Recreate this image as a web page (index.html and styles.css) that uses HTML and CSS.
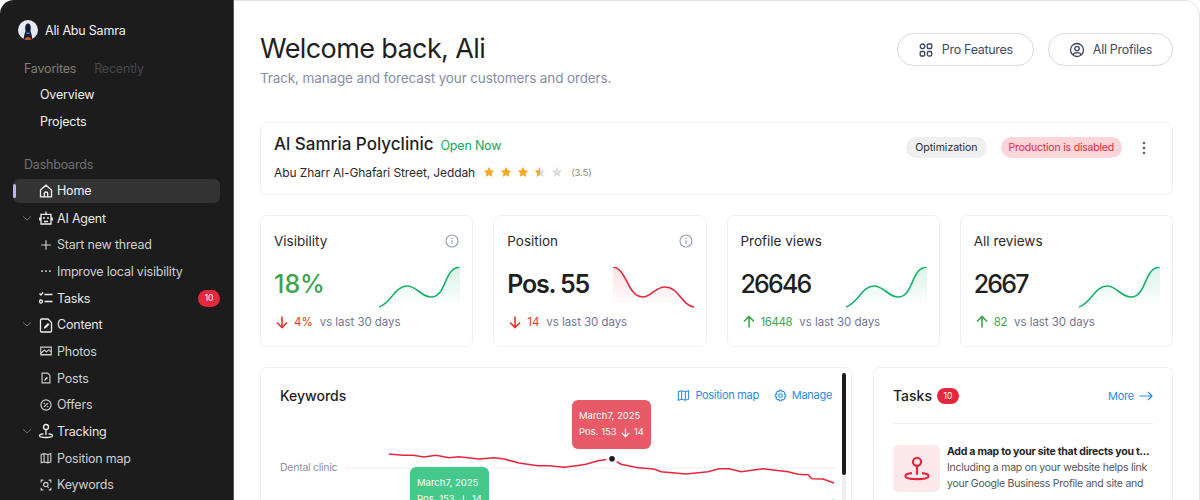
FILE: index.html
```html
<!DOCTYPE html>
<html lang="en">
<head>
  <meta charset="UTF-8" />
  <meta name="viewport" content="width=device-width, initial-scale=1.0" />
  <title>Dashboard</title>
  <link rel="stylesheet" href="styles.css">
</head>

<body>
  <div class="app">
    <aside class="sidebar">
      <div class="profile">
        <svg class="avatar" viewBox="0 0 20 20">
          <circle cx="10" cy="10" r="10" fill="#e6eaf4"/>
          <path d="M5.500 20 C6 15 7 13 7.500 11 C6.500 6 8 3.500 10 3.500 C12 3.500 13.500 6 12.500 11 C13 13 14 15 14.500 20 Z" fill="#141a33"/>
          <path d="M6.500 20 C7 18 8 17 10 17 C12 17 13 18 13.500 20 Z" fill="#c2542c"/>
          <path d="M8.500 11 C9 13 11 13 11.500 11 L11.500 14 L8.500 14 Z" fill="#3d6fb8"/>
        </svg>
        <span>Ali Abu Samra</span>
      </div>

      <div class="tabs">
        <span class="tab-on">Favorites</span>
        <span class="tab-off">Recently</span>
      </div>
      <div class="nav-row fav">Overview</div>
      <div class="nav-row fav">Projects</div>

      <div class="section-label">Dashboards</div>

      <div class="nav-row active">
        <span class="marker"></span>
        <svg class="icon" viewBox="0 0 16 16"><path d="M2.500 7 L8 2.200 L13.500 7 V13.800 H2.500 Z M6.300 13.800 V10.500 C6.300 8.500 9.700 8.500 9.700 10.500 V13.800"/></svg>
        <span>Home</span>
      </div>
      <div class="nav-row main-row">
        <svg class="chev" viewBox="0 0 10 10"><path d="M1 3.300 L5 7 L9 3.300"/></svg>
        <svg class="icon" viewBox="0 0 16 16"><path d="M8 1.500 V4 M3 4.300 H13 V14 H3 Z M1.800 7.500 V10.500 M14.200 7.500 V10.500 M6 11.500 H10"/><circle cx="6" cy="8" r=".9" class="solid"/><circle cx="10" cy="8" r=".9" class="solid"/></svg>
        <span>AI Agent</span>
      </div>
      <div class="nav-row sub">
        <svg class="icon" viewBox="0 0 16 16"><path d="M8 2.500 V13.500 M2.500 8 H13.500"/></svg>
        <span>Start new thread</span>
      </div>
      <div class="nav-row sub">
        <svg class="icon" viewBox="0 0 16 16"><circle cx="3.500" cy="8" r="1" class="solid"/><circle cx="8" cy="8" r="1" class="solid"/><circle cx="12.500" cy="8" r="1" class="solid"/></svg>
        <span>Improve local visibility</span>
      </div>
      <div class="nav-row main-row">
        <svg class="icon" viewBox="0 0 16 16"><path d="M6.500 4.500 H14.500 M6.500 11.500 H14.500 M1.500 3.500 L3 5 L5 2.500"/><circle cx="3" cy="11.500" r="1.500"/></svg>
        <span>Tasks</span>
        <span class="count">10</span>
      </div>
      <div class="nav-row main-row">
        <svg class="chev" viewBox="0 0 10 10"><path d="M1 3.300 L5 7 L9 3.300"/></svg>
        <svg class="icon" viewBox="0 0 16 16"><path d="M10 2 H3.500 C2.800 2 2.500 2.300 2.500 3 V14 C2.500 14.700 2.800 15 3.500 15 H12.500 C13.200 15 13.500 14.700 13.500 14 V5.500 Z"/><path d="M5.800 11.800 L6.200 9.800 L10 6 L11.500 7.500 L7.700 11.300 Z" class="solid"/></svg>
        <span>Content</span>
      </div>
      <div class="nav-row sub">
        <svg class="icon" viewBox="0 0 16 16"><path d="M2 3.500 H14 V12.500 H2 Z M2.500 10.500 L6 7 L8.500 9 L11 6.500 L13.500 9 M2.500 12 H13.500"/></svg>
        <span>Photos</span>
      </div>
      <div class="nav-row sub">
        <svg class="icon" viewBox="0 0 16 16"><path d="M10 2.500 H3.500 V13.500 H12.500 V5 Z"/><path d="M6 11 L6.300 9.500 L9 6.800 L10.200 8 L7.500 10.700 Z" class="solid"/></svg>
        <span>Posts</span>
      </div>
      <div class="nav-row sub">
        <svg class="icon" viewBox="0 0 16 16"><circle cx="8" cy="8" r="5.800"/><path d="M5.800 10.200 L10.200 5.800"/><circle cx="6" cy="6.200" r=".8" class="solid"/><circle cx="10" cy="9.800" r=".8" class="solid"/></svg>
        <span>Offers</span>
      </div>
      <div class="nav-row main-row">
        <svg class="chev" viewBox="0 0 10 10"><path d="M1 3.300 L5 7 L9 3.300"/></svg>
        <svg class="icon" viewBox="0 0 16 16"><circle cx="8" cy="4" r="2.500"/><path d="M8 6.500 V12 M5.500 10.800 C2.800 11 1.500 11.800 1.500 12.700 C1.500 14 4 14.500 8 14.500 C12 14.500 14.500 14 14.500 12.700 C14.500 11.800 13.200 11 10.500 10.800"/></svg>
        <span>Tracking</span>
      </div>
      <div class="nav-row sub">
        <svg class="icon" viewBox="0 0 16 16"><path d="M2.500 4 L5.800 3 L10.200 4 L13.500 3 V12.500 L10.200 13.500 L5.800 12.500 L2.500 13.500 Z M5.800 3 V12.500 M10.200 4 V13.500"/></svg>
        <span>Position map</span>
      </div>
      <div class="nav-row sub">
        <svg class="icon" viewBox="0 0 16 16"><path d="M2.500 5 V2.500 H5 M11 2.500 H13.500 V5 M13.500 11 V13.500 H11 M5 13.500 H2.500 V11 M9.500 9.500 L11 11"/><circle cx="7.800" cy="7.500" r="2.500"/></svg>
        <span>Keywords</span>
      </div>
    </aside>

    <main class="content">
      <header class="page-head">
        <div>
          <h1>Welcome back, Ali</h1>
          <p class="subtitle">Track, manage and forecast your customers and orders.</p>
        </div>
        <div class="head-actions">
          <button class="pill-btn">
            <svg viewBox="0 0 16 16"><circle cx="4.500" cy="4.300" r="2.300"/><rect x="9.300" y="2" width="4.500" height="4.500" rx="1"/><rect x="2.200" y="9.500" width="4.500" height="4.500" rx="1"/><rect x="9.300" y="9.500" width="4.500" height="4.500" rx="1.500"/></svg>
            Pro Features
          </button>
          <button class="pill-btn">
            <svg viewBox="0 0 16 16"><circle cx="8" cy="8" r="6.500"/><circle cx="8" cy="6.500" r="2.200"/><path d="M3.800 13 C4.500 9.800 11.500 9.800 12.200 13"/></svg>
            All Profiles
          </button>
        </div>
      </header>

      <section class="card business">
        <div>
          <div class="biz-title">
            <h2>Al Samria Polyclinic</h2>
            <span class="open">Open Now</span>
          </div>
          <div class="biz-address">
            <span>Abu Zharr Al-Ghafari Street, Jeddah</span>
            <span class="stars">
              <svg viewBox="0 0 12 12"><path class="star-on" d="M6 .8 L7.600 4.200 L11.300 4.700 L8.600 7.200 L9.300 10.900 L6 9.100 L2.700 10.900 L3.400 7.200 L.7 4.700 L4.400 4.200 Z"/></svg>
              <svg viewBox="0 0 12 12"><path class="star-on" d="M6 .8 L7.600 4.200 L11.300 4.700 L8.600 7.200 L9.300 10.900 L6 9.100 L2.700 10.900 L3.400 7.200 L.7 4.700 L4.400 4.200 Z"/></svg>
              <svg viewBox="0 0 12 12"><path class="star-on" d="M6 .8 L7.600 4.200 L11.300 4.700 L8.600 7.200 L9.300 10.900 L6 9.100 L2.700 10.900 L3.400 7.200 L.7 4.700 L4.400 4.200 Z"/></svg>
              <svg viewBox="0 0 12 12"><path class="star-off" d="M6 .8 L7.600 4.200 L11.300 4.700 L8.600 7.200 L9.300 10.900 L6 9.100 L2.700 10.900 L3.400 7.200 L.7 4.700 L4.400 4.200 Z"/><path class="star-on" d="M6 .8 V9.100 L2.700 10.900 L3.400 7.200 L.7 4.700 L4.400 4.200 Z"/></svg>
              <svg viewBox="0 0 12 12"><path class="star-off" d="M6 .8 L7.600 4.200 L11.300 4.700 L8.600 7.200 L9.300 10.900 L6 9.100 L2.700 10.900 L3.400 7.200 L.7 4.700 L4.400 4.200 Z"/></svg>
            </span>
            <span class="rating">(3.5)</span>
          </div>
        </div>
        <div class="biz-tags">
          <span class="tag tag-grey">Optimization</span>
          <span class="tag tag-red">Production is disabled</span>
          <svg class="dots" viewBox="0 0 4 14"><circle cx="2" cy="2" r="1.300"/><circle cx="2" cy="7" r="1.300"/><circle cx="2" cy="12" r="1.300"/></svg>
        </div>
      </section>

      <section class="stats">
        <div class="card stat">
          <div class="stat-head">
            <span>Visibility</span>
            <svg class="info" viewBox="0 0 14 14"><circle cx="7" cy="7" r="6"/><path d="M7 6.300 V10"/><circle cx="7" cy="4.200" r=".8" class="info-dot"/></svg>
          </div>
          <div class="stat-body">
            <span class="stat-value green-value">18%</span>
            <svg class="spark" viewBox="0 0 82 41">
              <defs>
                <linearGradient id="fillGreen" x1="0" y1="0" x2="0" y2="1"><stop offset="0" stop-color="#17b26a" stop-opacity=".16"/><stop offset="1" stop-color="#17b26a" stop-opacity="0"/></linearGradient>
                <linearGradient id="fillRed" x1="0" y1="0" x2="0" y2="1"><stop offset="0" stop-color="#e5273d" stop-opacity=".14"/><stop offset="1" stop-color="#e5273d" stop-opacity="0"/></linearGradient>
              </defs>
              <path d="M0 40 C12 36 16 19 28 19 C38 19 42 30 52 30 C68 30 64 1 81 0 V36 H10 Z" fill="url(#fillGreen)"/>
              <path d="M0 40 C12 36 16 19 28 19 C38 19 42 30 52 30 C68 30 64 1 81 0" class="line-green"/>
            </svg>
          </div>
          <div class="delta">
            <svg class="arrow red" viewBox="0 0 14 14"><path d="M7 1.500 V12.500 M2 7.500 L7 12.500 L12 7.500"/></svg>
            <span class="delta-red">4%</span>
            <span class="delta-note">vs last 30 days</span>
          </div>
        </div>

        <div class="card stat">
          <div class="stat-head">
            <span>Position</span>
            <svg class="info" viewBox="0 0 14 14"><circle cx="7" cy="7" r="6"/><path d="M7 6.300 V10"/><circle cx="7" cy="4.200" r=".8" class="info-dot"/></svg>
          </div>
          <div class="stat-body">
            <span class="stat-value pos-value">Pos. 55</span>
            <svg class="spark" viewBox="0 0 82 41">
              <path d="M0 0 C14 1 14 30 30 30 C38 30 42 20 52 20 C66 20 68 38 81 40 L70 36 H0 Z" fill="url(#fillRed)"/>
              <path d="M0 0 C14 1 14 30 30 30 C38 30 42 20 52 20 C66 20 68 38 81 40" class="line-red"/>
            </svg>
          </div>
          <div class="delta">
            <svg class="arrow red" viewBox="0 0 14 14"><path d="M7 1.500 V12.500 M2 7.500 L7 12.500 L12 7.500"/></svg>
            <span class="delta-red">14</span>
            <span class="delta-note">vs last 30 days</span>
          </div>
        </div>

        <div class="card stat">
          <div class="stat-head"><span>Profile views</span></div>
          <div class="stat-body">
            <span class="stat-value num-value">26646</span>
            <svg class="spark" viewBox="0 0 82 41">
              <path d="M0 40 C12 36 16 19 28 19 C38 19 42 30 52 30 C68 30 64 1 81 0 V36 H10 Z" fill="url(#fillGreen)"/>
              <path d="M0 40 C12 36 16 19 28 19 C38 19 42 30 52 30 C68 30 64 1 81 0" class="line-green"/>
            </svg>
          </div>
          <div class="delta">
            <svg class="arrow up" viewBox="0 0 14 14"><path d="M7 12.500 V1.500 M2 6.500 L7 1.500 L12 6.500"/></svg>
            <span class="delta-green">16448</span>
            <span class="delta-note">vs last 30 days</span>
          </div>
        </div>

        <div class="card stat">
          <div class="stat-head"><span>All reviews</span></div>
          <div class="stat-body">
            <span class="stat-value num-value">2667</span>
            <svg class="spark" viewBox="0 0 82 41">
              <path d="M0 40 C12 36 16 19 28 19 C38 19 42 30 52 30 C68 30 64 1 81 0 V36 H10 Z" fill="url(#fillGreen)"/>
              <path d="M0 40 C12 36 16 19 28 19 C38 19 42 30 52 30 C68 30 64 1 81 0" class="line-green"/>
            </svg>
          </div>
          <div class="delta">
            <svg class="arrow up" viewBox="0 0 14 14"><path d="M7 12.500 V1.500 M2 6.500 L7 1.500 L12 6.500"/></svg>
            <span class="delta-green">82</span>
            <span class="delta-note">vs last 30 days</span>
          </div>
        </div>
      </section>

      <section class="bottom">
        <div class="card keywords">
          <div class="kw-head">
            <h3>Keywords</h3>
            <div class="kw-links">
              <a>
                <svg viewBox="0 0 14 14"><path d="M1.500 3 L5 1.800 L9 3 L12.500 1.800 V11 L9 12.200 L5 11 L1.500 12.200 Z M5 1.800 V11 M9 3 V12.200"/></svg>
                Position map
              </a>
              <a>
                <svg viewBox="0 0 14 14"><circle cx="7" cy="7" r="2"/><path d="M5.800 1.300 H8.200 L8.600 3 L10.200 2.400 L11.900 4.100 L11 5.600 L12.700 6.200 V8 L11 8.400 L11.900 10 L10.200 11.700 L8.600 11 L8.200 12.700 H5.800 L5.400 11 L3.800 11.700 L2.100 10 L3 8.400 L1.300 8 V6.200 L3 5.600 L2.100 4.100 L3.800 2.400 L5.400 3 Z"/></svg>
                Manage
              </a>
            </div>
          </div>
          <div class="scroll-track"><div class="scroll-thumb"></div></div>

          <span class="axis-label">Dental clinic</span>
          <svg class="kw-chart" viewBox="0 0 592 133">
            <path d="M84 100 H574" class="grid-line"/>
            <polyline class="line-kw" points="128,86 142,87.300 152,87.300 163,89 175,87.300 188,89.700 198,88.700 218,91 233,89.700 243,91 258,95 277,97.700 288,97.700 303,99.300 315,97.700 325,96.300 337,92.700 348,91.300 351,90.700 360,96.300 377,99.700 393,101 400,103.700 425,106 447,103.700 458,100.700 468,100.700 480,103.700 502,100.700 527,103.700 537,106.300 547,106.700 551,110.700 562,111 573,115"/>
            <circle cx="351" cy="90.700" r="6" fill="#fff" opacity=".85"/>
            <circle cx="351" cy="90.700" r="2.800" fill="#1c1c1c"/>
            <path d="M571 132.500 H574" stroke="#17b26a" stroke-width="1.500"/>
          </svg>

          <div class="tip tip-red">
            <div>March7, 2025</div>
            <div class="tip-row"><span>Pos. 153</span><svg viewBox="0 0 12 12"><path d="M6 1.500 V10.500 M2 6.500 L6 10.500 L10 6.500"/></svg><span>14</span></div>
          </div>
          <div class="tip tip-green">
            <div>March7, 2025</div>
            <div class="tip-row"><span>Pos. 153</span><svg viewBox="0 0 12 12"><path d="M6 1.500 V10.500 M2 6.500 L6 10.500 L10 6.500"/></svg><span>14</span></div>
          </div>
        </div>

        <div class="card tasks">
          <div class="tasks-head">
            <h3>Tasks</h3>
            <span class="count">10</span>
            <a class="more">More
              <svg viewBox="0 0 14 10"><path d="M.5 5 H13 M9 1 L13 5 L9 9"/></svg>
            </a>
          </div>
          <div class="task">
            <div class="task-icon">
              <svg viewBox="3 3 18 18"><circle cx="12" cy="7" r="2.800"/><path d="M12 9.800 V16 M8.500 14.800 C5.500 15 4 15.800 4 17 C4 18.400 7.500 19 12 19 C16.500 19 20 18.400 20 17 C20 15.800 18.500 15 15.500 14.800"/></svg>
            </div>
            <div class="task-text">
              <div class="task-title">Add a map to your site that directs you t...</div>
              <p>Including a map on your website helps link your Google Business Profile and site and ...</p>
            </div>
          </div>
        </div>
      </section>
    </main>
  </div>
</body>
</html>
```

FILE: styles.css
```css
* {
  box-sizing: border-box;
}

html, body {
  height: 100%;
}

body {
  margin: 0;
  background: #fff;
  font-family: Inter, "Noto Sans", sans-serif;
  color: #1c1c1c;
  overflow: hidden;
}

h1, h2, h3, p {
  margin: 0;
  font-weight: 500;
}

.app {
  display: flex;
  height: 500px;
  overflow: hidden;
}

/* Sidebar */

.sidebar {
  width: 234px;
  flex-shrink: 0;
  padding: 20px 13px 0 0;
  background: #1c1c1c;
  border-top-left-radius: 14px;
  border-right: 1px solid #5a5a5a;
  color: #fff;
  font-size: 12.5px;
  letter-spacing: -0.2px;
}

.profile {
  display: flex;
  align-items: center;
  gap: 7px;
  height: 20px;
  padding-left: 18px;
  color: #f2f2f2;
}

.avatar {
  width: 20px;
  height: 20px;
  flex-shrink: 0;
}

.tabs {
  display: flex;
  gap: 18px;
  margin-top: 21px;
  height: 16px;
  line-height: 16px;
  padding-left: 24px;
}

.tab-on {
  color: #808080;
}

.tab-off {
  color: #484848;
}

.nav-row {
  position: relative;
  display: flex;
  align-items: center;
  height: 26.67px;
  padding-left: 38px;
  color: #e6e6e6;
}

.tabs + .nav-row {
  margin-top: 4.5px;
}

.nav-row.fav {
  padding-left: 40px;
  color: #f0f0f0;
}

.nav-row .icon {
  width: 16px;
  height: 16px;
  margin-right: 3px;
  flex-shrink: 0;
  fill: none;
  stroke: #f0f0f0;
  stroke-width: 1.300;
}

.nav-row.sub .icon {
  width: 14px;
  height: 14px;
  margin: 0 4px 0 1px;
  stroke: #d0d0d0;
}

.nav-row.sub {
  color: #cfcfcf;
}

.icon .solid {
  fill: #f0f0f0;
  stroke: none;
}

.chev {
  position: absolute;
  left: 22px;
  top: 8px;
  width: 10px;
  height: 10px;
  fill: none;
  stroke: #6e6e6e;
  stroke-width: 1;
}

.section-label {
  margin-top: 22px;
  margin-bottom: 6px;
  height: 16px;
  line-height: 16px;
  padding-left: 24px;
  color: #717171;
}

.nav-row.active {
  margin-left: 13px;
  padding-left: 25px;
  height: 24px;
  margin-bottom: 2px;
  margin-top: 1px;
  background: #333;
  border-radius: 6px;
  color: #f4f4f4;
}

.marker {
  position: absolute;
  left: 0;
  top: 5px;
  width: 3px;
  height: 14px;
  border-radius: 2px;
  background: #b9b5f2;
}

.count {
  display: inline-flex;
  align-items: center;
  justify-content: center;
  width: 22px;
  height: 17px;
  border-radius: 9px;
  background: #e5273d;
  color: #fff;
  font-size: 8.500px;
}

.nav-row .count {
  margin-left: auto;
}

/* Main area */

.content {
  flex: 1;
  min-width: 0;
  padding: 30px 26px 0 26px;
  border-top: 1px solid #e4e4e4;
  border-right: 1px solid #e4e4e4;
  border-top-right-radius: 16px;
}

.page-head {
  display: flex;
  justify-content: space-between;
  align-items: flex-start;
  height: 91px;
}

h1 {
  font-size: 27px;
  line-height: 36px;
  font-weight: 400;
  letter-spacing: -0.6px;
  color: #1f1f1f;
}

.subtitle {
  margin-top: 2px;
  font-size: 13.500px;
  line-height: 18px;
  font-weight: 400;
  letter-spacing: -0.13px;
  color: #878da6;
}

.head-actions {
  display: flex;
  gap: 14px;
  margin-top: 2px;
}

.pill-btn {
  display: flex;
  align-items: center;
  gap: 8px;
  height: 33px;
  padding: 0 20px;
  background: #fff;
  border: 1px solid #d5d9e3;
  border-radius: 17px;
  color: #424c64;
  font: inherit;
  font-size: 12.500px;
  letter-spacing: -0.3px;
}

.pill-btn svg {
  width: 16px;
  height: 16px;
  fill: none;
  stroke: #3a445c;
  stroke-width: 1.300;
}

.card {
  background: #fff;
  border: 1px solid #f0f0f2;
  border-radius: 7px;
}

.business {
  display: flex;
  justify-content: space-between;
  align-items: flex-start;
  height: 73px;
  padding: 10px 26px 0 13px;
}

.biz-title {
  display: flex;
  align-items: baseline;
  gap: 7px;
  height: 22px;
}

h2 {
  font-size: 17px;
  font-weight: 500;
  line-height: 22px;
  color: #1f1f1f;
}

.open {
  font-size: 12.500px;
  letter-spacing: -0.2px;
  color: #14a660;
}

.biz-address {
  display: flex;
  align-items: center;
  margin-top: 8px;
  height: 18px;
  font-size: 12px;
  letter-spacing: -0.1px;
  color: #2a2a2a;
}

.stars {
  display: flex;
  gap: 5px;
  margin: 0 8px 0 8px;
}

.stars svg {
  width: 12px;
  height: 12px;
}

.star-on {
  fill: #f9a825;
}

.star-off {
  fill: #dedede;
}

.rating {
  font-size: 9.500px;
  color: #8a8a8a;
}

.biz-tags {
  display: flex;
  align-items: center;
  margin-top: 4px;
}

.tag {
  display: inline-flex;
  align-items: center;
  height: 21px;
  padding: 0 8px;
  border-radius: 11px;
  font-size: 10.500px;
}

.tag-grey {
  padding: 0 9px;
  background: #efefef;
  color: #2a2a2a;
  margin-right: 14px;
}

.tag-red {
  background: #fbd5d9;
  color: #e5273d;
  letter-spacing: -0.2px;
}

.dots {
  width: 4px;
  height: 14px;
  margin-left: 20px;
  fill: #59607a;
}

/* Stat cards */

.stats {
  display: grid;
  grid-template-columns: repeat(4, 1fr);
  gap: 20px;
  margin-top: 20px;
}

.stat {
  height: 132px;
  padding: 15px 11px 0 13px;
}

.stat-head {
  display: flex;
  justify-content: space-between;
  align-items: center;
  height: 20px;
  font-size: 13.500px;
  color: #2a2a2a;
}

.info {
  width: 14px;
  height: 14px;
  margin-right: 2px;
  fill: none;
  stroke: #9aa3b8;
  stroke-width: 1.200;
}

.info-dot {
  fill: #9aa3b8;
  stroke: none;
}

.stat-body {
  display: flex;
  justify-content: space-between;
  margin-top: 16px;
  height: 41px;
}

.stat-value {
  margin-top: 2px;
  font-size: 25px;
  line-height: 30px;
  font-weight: 500;
  color: #1f1f1f;
}

.green-value {
  color: #3fa34d;
}

.pos-value {
  font-weight: 600;
  letter-spacing: -1.200px;
}

.num-value {
  letter-spacing: -1.800px;
}

.spark {
  width: 82px;
  height: 41px;
  flex-shrink: 0;
}

.line-green, .line-red, .line-kw {
  fill: none;
  stroke-width: 1.600;
}

.line-green {
  stroke: #17b26a;
}

.line-red {
  stroke: #e5273d;
}

.delta {
  display: flex;
  align-items: center;
  margin-top: 6px;
  height: 16px;
  font-size: 11.500px;
}

.arrow {
  width: 14px;
  height: 14px;
  margin: 0 5px 0 1px;
  fill: none;
  stroke-width: 1.600;
}

.arrow.red {
  stroke: #e5352b;
}

.arrow.up {
  stroke: #3fa34d;
}

.delta-red {
  color: #e5352b;
  margin-right: 7px;
}

.delta-green {
  color: #3fa34d;
  margin-right: 7px;
  letter-spacing: -0.4px;
}

.delta-note {
  color: #6f7690;
  letter-spacing: -0.05px;
}

/* Bottom row */

.bottom {
  display: flex;
  gap: 21px;
  margin-top: 20px;
}

.keywords {
  position: relative;
  width: 592px;
  height: 160px;
  flex-shrink: 0;
}

.kw-head {
  display: flex;
  justify-content: space-between;
  align-items: center;
  height: 20px;
  margin-top: 17px;
  padding: 0 19px;
}

h3 {
  font-size: 14px;
  font-weight: 500;
  color: #1f1f1f;
}

.kw-links {
  display: flex;
  gap: 15px;
}

.kw-links a {
  display: flex;
  align-items: center;
  gap: 5px;
  font-size: 11px;
  letter-spacing: -0.3px;
  color: #2b8be6;
}

.kw-links svg {
  width: 13px;
  height: 13px;
  fill: none;
  stroke: #2b8be6;
  stroke-width: 1.100;
}

.scroll-track {
  position: absolute;
  top: 5px;
  right: 5px;
  width: 4px;
  height: 150px;
  background: #eee;
  border-radius: 2px;
}

.scroll-thumb {
  height: 102px;
  background: #1c1c1c;
  border-radius: 2px;
}

.axis-label {
  position: absolute;
  left: 19px;
  top: 93px;
  font-size: 10.500px;
  letter-spacing: -0.25px;
  color: #8b90a6;
}

.kw-chart {
  position: absolute;
  left: 0;
  top: 0;
  width: 592px;
  height: 133px;
}

.grid-line {
  stroke: #eef0f3;
  stroke-width: 1;
}

.line-kw {
  stroke: #e5273d;
}

.tip {
  position: absolute;
  width: 79px;
  height: 49px;
  padding: 8px 7px;
  border-radius: 6px;
  color: #fff;
  font-size: 9.500px;
  line-height: 16px;
}

.tip-row {
  display: flex;
  justify-content: space-between;
  align-items: center;
}

.tip-row svg {
  width: 11px;
  height: 11px;
  fill: none;
  stroke: #fff;
  stroke-width: 1.300;
}

.tip-red {
  left: 311px;
  top: 32px;
  background: #e85a68;
}

.tip-green {
  left: 149px;
  top: 99px;
  background: #45c98b;
}

/* Tasks card */

.tasks {
  flex: 1;
  min-width: 0;
  height: 160px;
  padding: 0 19px;
}

.tasks-head {
  display: flex;
  align-items: center;
  gap: 5px;
  height: 56px;
  border-bottom: 1px solid #eceef1;
}

.tasks-head .count {
  height: 16px;
  font-size: 8.500px;
}

.more {
  display: flex;
  align-items: center;
  gap: 5px;
  margin-left: auto;
  font-size: 11px;
  letter-spacing: -0.2px;
  color: #2b8be6;
}

.more svg {
  width: 14px;
  height: 10px;
  fill: none;
  stroke: #2b8be6;
  stroke-width: 1.200;
}

.task {
  display: flex;
  gap: 7px;
  margin-top: 21px;
}

.task-icon {
  display: flex;
  align-items: center;
  justify-content: center;
  width: 47px;
  height: 47px;
  flex-shrink: 0;
  background: #fce8ea;
  border-radius: 6px;
}

.task-icon svg {
  width: 26px;
  height: 26px;
  fill: none;
  stroke: #e5273d;
  stroke-width: 1.500;
}

.task-text {
  min-width: 0;
  font-size: 10.500px;
  letter-spacing: -0.25px;
}

.task-title {
  font-weight: 700;
  line-height: 14px;
  white-space: nowrap;
  overflow: hidden;
  color: #262626;
}

.task-text p {
  font-weight: 400;
  line-height: 15.500px;
  color: #555;
  margin-top: 1px;
}
```
